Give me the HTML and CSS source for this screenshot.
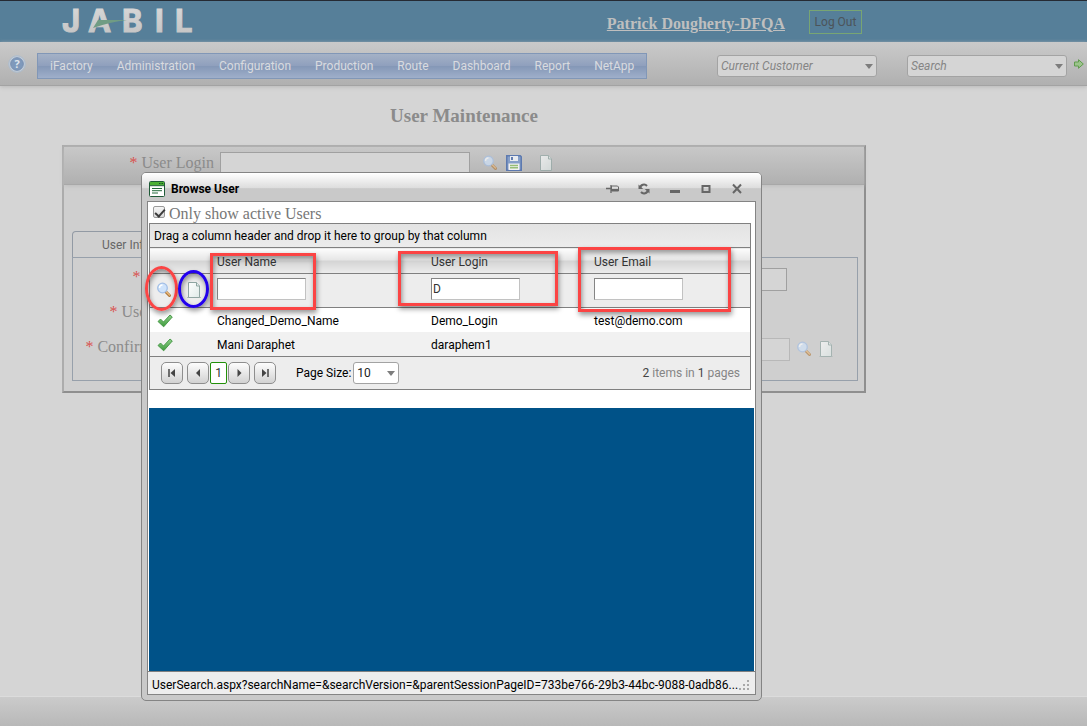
FILE: index.html
```html
<!DOCTYPE html>
<html lang="en">
<head>
<meta charset="utf-8">
<title>User Maintenance</title>
<link rel="stylesheet" href="styles.css">
</head>
<body>
<svg class="defs" aria-hidden="true">
  <defs>
    <linearGradient id="silver" x1="0" y1="0" x2="0" y2="1"><stop offset="0" stop-color="#dadada"/><stop offset="1" stop-color="#c2c2c2"/></linearGradient>
    <linearGradient id="paper" x1="0" y1="0" x2="1" y2="1"><stop offset="0" stop-color="#fff"/><stop offset="1" stop-color="#dfeae8"/></linearGradient>
    <linearGradient id="tick" x1="0" y1="0" x2="0" y2="1"><stop offset="0" stop-color="#8fd08a"/><stop offset="1" stop-color="#3d9a3c"/></linearGradient>
    <symbol id="i-search" viewBox="0 0 16 16">
      <path d="M9.5 9.5l4 4" stroke="#b07a3c" stroke-width="3" stroke-linecap="round"/>
      <path d="M10 9.5l3.6 3.6" stroke="#eebd80" stroke-width="1.2" stroke-linecap="round"/>
      <circle cx="6.5" cy="6" r="4.8" fill="#cfe3fb" stroke="#a3bfe6" stroke-width="1.3"/>
      <path d="M3.5 6a3 3 0 0 1 3-3" fill="none" stroke="#fff" stroke-width="1.4"/>
    </symbol>
    <symbol id="i-page" viewBox="0 0 16 16">
      <path d="M1 15.5h14" stroke="#b5bdbb" stroke-width="1"/>
      <path d="M2.500 .5h8L13.500 4v11.500h-11z" fill="url(#paper)" stroke="#8fa5a2"/>
      <path d="M10.500 .5V4h3" fill="#e4eeec" stroke="#8fa5a2"/>
    </symbol>
    <symbol id="i-save" viewBox="0 0 16 16">
      <path d="M.75 .75h13.500l1 1v13.500H.75z" fill="#7898cb" stroke="#4569ac" stroke-width="1.5"/>
      <path d="M4 1h8v5H4z" fill="#f2f6fc"/><path d="M5 2h2v3H5z" fill="#4c6dab"/>
      <path d="M2.500 8.500h11V15h-11z" fill="#fff"/>
      <path d="M4 10.500h8M4 12.800h8" stroke="#8ebf66" stroke-width="1.400"/>
    </symbol>
    <symbol id="i-tick" viewBox="0 0 16 14">
      <path d="M1 7.500L3.500 5l3 3L13 1l2.300 2L6.700 12.800z" fill="url(#tick)" stroke="#3f9440" stroke-width=".9" stroke-linejoin="round"/>
    </symbol>
  </defs>
</svg>

<div class="page">
  <header class="brand">
    <svg class="logo" viewBox="0 0 140 40" role="img" aria-label="Jabil">
      <text class="logo-text" x="2 28 62 95 115" y="30">JABIL</text>
      <path d="M38 18h29Q50 20 33 26z" fill="#709c84"/>
    </svg>
    <a class="account" href="#">Patrick Dougherty-DFQA</a>
    <button class="logout" type="button">Log Out</button>
  </header>

  <div class="toolbar">
    <svg class="help" viewBox="0 0 18 18" role="img" aria-label="Help">
      <circle cx="9" cy="9" r="8.300" fill="#c1ccd8" stroke="#adbccd"/>
      <circle cx="9" cy="9" r="6.300" fill="#7f99bb" stroke="#7890b2"/>
      <text class="help-mark" x="9" y="13" text-anchor="middle">?</text>
    </svg>
    <nav class="menu">
      <a href="#">iFactory</a><a href="#">Administration</a><a href="#">Configuration</a><a href="#">Production</a><a href="#">Route</a><a href="#">Dashboard</a><a href="#">Report</a><a href="#">NetApp</a>
    </nav>
    <div class="combo combo-first"><select aria-label="Current Customer"><option>Current Customer</option></select></div>
    <div class="combo"><select aria-label="Search"><option>Search</option></select></div>
    <button class="go" type="button" aria-label="Go"><svg viewBox="0 0 10 10"><path d="M.5 3h4V.7L9.300 5 4.500 9.300V7h-4z" fill="#9cc48c" stroke="#619c4e"/></svg></button>
  </div>

  <main class="content">
    <h1>User Maintenance</h1>
    <form class="panel">
      <div class="panel-head">
        <label for="login"><i>*</i> User Login</label>
        <input id="login" type="text">
        <svg class="icon find"><use href="#i-search"/></svg>
        <svg class="icon save"><use href="#i-save"/></svg>
        <svg class="icon"><use href="#i-page"/></svg>
      </div>
      <div class="panel-body">
        <button class="tab" type="button">User Info</button>
        <div class="fields">
          <div class="field"><label for="uname"><i>*</i> User Name</label><input id="uname" type="text"></div>
          <div class="field"><label for="pwd"><i>*</i> User Password</label><input id="pwd" class="short" type="password"></div>
          <div class="field"><label for="pwd2"><i>*</i> Confirm Password</label><input id="pwd2" class="light" type="password">
            <svg class="icon find"><use href="#i-search"/></svg><svg class="icon"><use href="#i-page"/></svg></div>
        </div>
      </div>
    </form>
  </main>
  <footer class="foot"></footer>
</div>

<section class="window" aria-label="Browse User">
  <div class="titlebar">
    <svg class="app-icon" viewBox="0 0 16 16"><rect x=".5" y=".5" width="15" height="15" rx="1" fill="#fff" stroke="#1f5a37"/><path d="M1 1h14v3.500H1z" fill="#4bb034"/><path d="M10 2h1.500v1H10zM12.500 2H14v1h-1.500z" fill="#164e26"/><path d="M.5 4.700h15" stroke="#1f5a37"/><path d="M3 7.500h10M3 9.700h10M3 12h6" stroke="#246a3c"/></svg>
    <h2>Browse User</h2>
    <button type="button" aria-label="Pin"><svg viewBox="0 0 14 12"><path d="M0 5.500h5M5 2v8" stroke="#666" stroke-width="1.300"/><path d="M5.500 3h6l1 1v4H5.500z" fill="none" stroke="#666"/><path d="M6 7h7" stroke="#666" stroke-width="2"/></svg></button>
    <button type="button" aria-label="Reload"><svg viewBox="0 0 14 12"><path d="M3 5a4 4 0 0 1 7-2M11 7a4 4 0 0 1-7 2" fill="none" stroke="#666" stroke-width="2"/><path d="M1.500 1.500V6h4.700zM12.500 10.500V6H7.800z" fill="#666"/></svg></button>
    <button type="button" aria-label="Minimize"><svg viewBox="0 0 14 12"><path d="M2 8.500h10" stroke="#666" stroke-width="3"/></svg></button>
    <button type="button" aria-label="Maximize"><svg viewBox="0 0 14 12"><path d="M3.500 3h7v6h-7z" fill="none" stroke="#666" stroke-width="2"/></svg></button>
    <button type="button" aria-label="Close"><svg viewBox="0 0 14 12"><path d="M3 1.500l8 8.500M11 1.500L3 10" stroke="#666" stroke-width="2"/></svg></button>
  </div>
  <div class="frame">
    <div class="sheet">
      <label class="active-only"><input type="checkbox" checked> Only show active Users</label>
      <div class="grid">
        <div class="group-hint">Drag a column header and drop it here to group by that column</div>
        <table>
          <colgroup><col class="c-find"><col class="c-new"><col class="c-name"><col class="c-login"><col></colgroup>
          <thead>
            <tr class="heads"><th></th><th></th><th>User Name</th><th>User Login</th><th>User Email</th></tr>
            <tr class="filters">
              <td><svg class="icon"><use href="#i-search"/></svg></td>
              <td><svg class="icon"><use href="#i-page"/></svg></td>
              <td><input type="text" aria-label="Filter by user name"></td>
              <td><input type="text" aria-label="Filter by user login" value="D"></td>
              <td><input type="text" aria-label="Filter by user email"></td>
            </tr>
          </thead>
          <tbody>
            <tr><td><svg class="tick"><use href="#i-tick"/></svg></td><td></td><td>Changed_Demo_Name</td><td>Demo_Login</td><td>test@demo.com</td></tr>
            <tr><td><svg class="tick"><use href="#i-tick"/></svg></td><td></td><td>Mani Daraphet</td><td>daraphem1</td><td></td></tr>
          </tbody>
        </table>
        <div class="pager">
          <button type="button" aria-label="First page"><svg viewBox="0 0 8 8"><path d="M1 0v8" stroke="#444" stroke-width="1.500"/><path d="M7 0v8L2.500 4z" fill="#444"/></svg></button>
          <button type="button" aria-label="Previous page"><svg viewBox="0 0 8 8"><path d="M6 0v8L2 4z" fill="#444"/></svg></button>
          <a class="current" href="#">1</a>
          <button type="button" aria-label="Next page"><svg viewBox="0 0 8 8"><path d="M2.500 0v8l4-4z" fill="#444"/></svg></button>
          <button type="button" aria-label="Last page"><svg viewBox="0 0 8 8"><path d="M1 0v8l4.500-4z" fill="#444"/><path d="M7 0v8" stroke="#444" stroke-width="1.500"/></svg></button>
          <label for="size">Page Size:</label>
          <div class="size"><select id="size"><option>10</option></select></div>
          <span class="total"><b>2</b> items in <b>1</b> pages</span>
        </div>
      </div>
      <div class="fill"></div>
    </div>
    <div class="status">
      <span>UserSearch.aspx?searchName=&amp;searchVersion=&amp;parentSessionPageID=733be766-29b3-44bc-9088-0adb86...</span>
      <svg class="grip" viewBox="0 0 12 12"><path d="M9 1h2v2H9zM9 5h2v2H9zM9 9h2v2H9zM5 5h2v2H5zM5 9h2v2H5zM1 9h2v2H1z" fill="#a9a9a9"/></svg>
    </div>
  </div>
  <div class="mark oval mark-find"></div>
  <div class="mark oval mark-new"></div>
  <div class="mark mark-name"></div>
  <div class="mark mark-login"></div>
  <div class="mark mark-email"></div>
</section>
</body>
</html>
```
FILE: styles.css
```css
* { box-sizing: border-box; }
body {
  margin: 0;
  background: #d5d5d5;
  font: 12px/16px Roboto, "Noto Sans", sans-serif;
  color: #000;
}
button, input, select { font: inherit; color: inherit; margin: 0; border-radius: 0; }
button { padding: 0; border: 0; background: none; }
svg { display: block; flex: none; }
.defs { position: absolute; width: 0; height: 0; }
.icon { width: 16px; height: 16px; }
.page { display: flex; flex-direction: column; min-height: 100vh; }

/* Brand bar */
.brand {
  display: flex;
  align-items: center;
  height: 42px;
  padding: 0 225px 0 60px;
  border-top: 1px solid #252a33;
  background: #567f99;
}
.logo { width: 140px; height: 40px; overflow: visible; }
.logo-text { font: bold 31px Inter, sans-serif; fill: url(#silver); stroke: url(#silver); stroke-width: 1px; }
.account {
  margin-left: auto;
  font: bold 16px/20px "Liberation Serif", serif;
  color: #bfbfbf;
  padding-top: 4px;
}
.logout {
  width: 53px;
  height: 24px;
  margin-left: 24px;
  border: 1px solid #78a573;
  color: #4c545a;
}

/* Toolbar */
.toolbar {
  display: flex;
  align-items: center;
  height: 44px;
  padding: 5px 3px 0 8px;
  border-bottom: 1px solid #a3a3a3;
  background: linear-gradient(#cacaca, #b0b0b0);
  box-shadow: 0 1px 4px #b9b9b9;
}
.help { width: 18px; height: 18px; margin-bottom: 5px; }
.help-mark { font: bold 11px "Open Sans", sans-serif; fill: #dfe5ec; }
.menu {
  display: flex;
  height: 26px;
  margin-left: 11px;
  border: 1px solid #8197b7;
  background: linear-gradient(#a4b1c6, #8f9fbd 50%, #8598b7 52%, #9fafca);
}
.menu a { padding: 0 12px; line-height: 24px; color: #d9dbdf; text-decoration: none; }
.combo, .size { position: relative; }
.combo { width: 160px; margin-left: 30px; }
.combo-first { margin-left: auto; }
.combo select, .size select {
  display: block;
  width: 100%;
  height: 22px;
  padding: 0 3px;
  appearance: none;
  border: 1px solid #a3a3a3;
  border-radius: 3px;
  background: #d5d5d5;
  color: #858585;
  font-style: italic;
}
.combo::after, .size::after {
  content: "";
  position: absolute;
  right: 4px;
  top: 9px;
  border: 4px solid transparent;
  border-top: 5px solid #7d7d7d;
  border-bottom: 0;
  pointer-events: none;
}
.go { margin-left: 7px; margin-bottom: 5px; }
.go svg { width: 10px; height: 10px; }

/* Maintenance form */
.content { flex: 1; padding: 19px 221px 20px 62px; }
h1 {
  margin: 0 0 19px;
  text-align: center;
  font: bold 19px/21px "Liberation Serif", serif;
  color: #8b8b8b;
}
.panel {
  border: 2px solid;
  border-color: #acacac #8f8f8f #8f8f8f #acacac;
  background: #cfcfcf;
  font: 16px/20px "Liberation Serif", serif;
  color: #8b8b8b;
}
.panel i { color: #d9534f; font-style: normal; }
.panel label { text-align: right; }
.panel input { border: 1px solid #a0a0a0; background: #d5d5d5; }
.panel-head {
  display: flex;
  align-items: center;
  height: 38px;
  padding-bottom: 5px;
  border-bottom: 1px solid #a8a8a8;
  background: linear-gradient(#c8c8c8, #b0b0b0);
  box-shadow: 0 1px 4px #bdbdbd;
}
.panel-head label { width: 150px; }
.panel-head input { width: 250px; height: 22px; margin-left: 6px; }
.panel .icon { opacity: .65; }
.panel .find { margin-left: 12px; }
.panel .save { margin: 0 8px; opacity: .8; }
.panel-head .icon:last-child { margin-left: 8px; }
.panel-body { padding: 46px 6px 10px 8px; }
.tab {
  display: block;
  width: 120px;
  height: 26px;
  padding: 0 0 0 29px;
  border: 1px solid #929aa4;
  border-bottom: 0;
  border-radius: 4px 0 0;
  font: 12px/24px Roboto, "Noto Sans", sans-serif;
  text-align: left;
  color: #666;
}
.fields {
  display: flex;
  flex-direction: column;
  gap: 11px;
  height: 124px;
  padding-top: 9px;
  border: 1px solid #97a0ab;
}
.field { display: flex; align-items: center; height: 24px; }
.field label { width: 144px; padding-bottom: 4px; }
.field input { width: 564px; height: 23px; margin-left: 6px; }
.field .short { width: 300px; }
.field .light { width: 567px; border-color: #b8b8b8; }
.field .find { margin: 0 6px 0 6px; }
.foot {
  height: 30px;
  border-top: 1px solid #dcdcdc;
  background: linear-gradient(#cbcbcb, #b8b8b8);
}

/* Popup window */
.window {
  position: absolute;
  left: 141px;
  top: 172px;
  bottom: 25px;
  width: 621px;
  min-height: 320px;
  display: flex;
  flex-direction: column;
  padding: 0 5px 5px;
  border: 1px solid #848484;
  border-radius: 5px;
  background: #c9c9c9;
}
.titlebar {
  display: flex;
  align-items: center;
  height: 28px;
  margin: 0 -5px;
  padding: 4px 17px 0 7px;
  border-radius: 4px 4px 0 0;
  background: linear-gradient(#fff, #dedede 52%, #c9c9c9 56%);
}
.titlebar h2 { flex: 1; margin: 0 0 0 6px; font-size: 12px; line-height: 16px; font-weight: bold; }
.titlebar button { margin-left: 17px; }
.titlebar button svg { width: 14px; height: 12px; }
.app-icon { width: 16px; height: 16px; }
.frame {
  flex: 1;
  display: flex;
  flex-direction: column;
  min-height: 0;
  border: 1px solid #848484;
  background: #fff;
}
.sheet { flex: 1; display: flex; flex-direction: column; min-height: 0; padding: 0 1px; }
.active-only {
  display: flex;
  align-items: center;
  gap: 4px;
  height: 21px;
  padding: 3px 4px 0;
  font: 16px/18px "Liberation Serif", serif;
  color: #777;
}
.active-only input {
  position: relative;
  width: 12px;
  height: 12px;
  margin: 0 0 4px;
  appearance: none;
  border: 1px solid #9a9a9a;
  border-radius: 2px;
  background: linear-gradient(#f5f5f5, #dcdcdc);
}
.active-only input:checked::after {
  content: "";
  position: absolute;
  left: 3px;
  top: 0;
  width: 4px;
  height: 8px;
  border: solid #3c3c3c;
  border-width: 0 2px 2px 0;
  transform: rotate(42deg);
}
.grid { margin-right: 3px; border: 1px solid #808080; background: #ededed; }
.group-hint { height: 23px; padding: 0 4px; line-height: 24px; background: linear-gradient(#e3e3e3, #ececec); }
table { width: 100%; table-layout: fixed; border-collapse: collapse; }
.c-find { width: 30px; }
.c-new { width: 30px; }
.c-name { width: 214px; }
.c-login { width: 163px; }
th, td { height: 24px; padding: 2px 7px 0; text-align: left; font-weight: normal; white-space: nowrap; }
.heads {
  border-top: 1px solid #808080;
  border-bottom: 1px solid #808080;
  background: linear-gradient(#fcfcfc, #e6e6e6 46%, #d4d4d4 50%, #ececec);
}
.heads th { height: 26px; color: #333; }
.filters { border-bottom: 1px solid #808080; }
.filters td { height: 34px; padding: 0 7px 4px; }
.filters td:first-child, .filters td:nth-child(2) { padding: 0 6px 2px; }
.filters input {
  display: block;
  width: 89px;
  height: 22px;
  padding: 0 1px;
  border: 1px solid;
  border-color: #858585 #c2c2c2 #c2c2c2 #858585;
  background: #fff;
  color: #333;
}
tbody tr { background: #fff; }
tbody tr + tr { background: #f1f1f1; }
.tick { width: 16px; height: 14px; }
.pager {
  display: flex;
  align-items: center;
  height: 33px;
  padding: 0 10px 0 11px;
  border-top: 1px solid #808080;
}
.pager button {
  display: grid;
  place-items: center;
  width: 22px;
  height: 22px;
  margin-right: 4px;
  border: 1px solid #8e8e8e;
  border-radius: 5px;
  background: linear-gradient(#fdfdfd, #d2d2d2);
}
.pager button svg { width: 8px; height: 8px; }
.pager button:nth-of-type(2) { margin-right: 1px; }
.current {
  width: 17px;
  height: 22px;
  margin-right: 1px;
  border: 1px solid #22900a;
  border-radius: 2px;
  background: #fff;
  line-height: 20px;
  text-align: center;
  text-decoration: none;
  color: #333;
}
.pager label { margin-left: 16px; }
.size { width: 46px; margin-left: 2px; }
.size select { background: #fff; color: #222; font-style: normal; }
.total { margin-left: auto; color: #858585; }
.total b { font-weight: normal; color: #444; }
.fill { flex: 1; margin-top: 18px; background: #005288; }
.status {
  display: flex;
  align-items: center;
  height: 23px;
  padding: 3px 5px 0 4px;
  border-top: 1px solid #808080;
  background: #ededed;
  line-height: 18px;
}
.status span { flex: 1; white-space: nowrap; }
.grip { width: 12px; height: 12px; }

/* Callouts over the popup */
.mark {
  position: absolute;
  border: 3px solid #fb4444;
  box-shadow: 1px 3px 5px #0006, inset 1px 3px 5px #0006;
  pointer-events: none;
}
.oval { border-radius: 50%; }
.mark-find { left: 3px; top: 93px; width: 33px; height: 45px; }
.mark-new { left: 36px; top: 97px; width: 31px; height: 38px; border-color: #2200ee; }
.mark-name { left: 68px; top: 80px; width: 106px; height: 57px; }
.mark-login { left: 256px; top: 78px; width: 160px; height: 55px; }
.mark-email { left: 436px; top: 74px; width: 153px; height: 65px; }
```
